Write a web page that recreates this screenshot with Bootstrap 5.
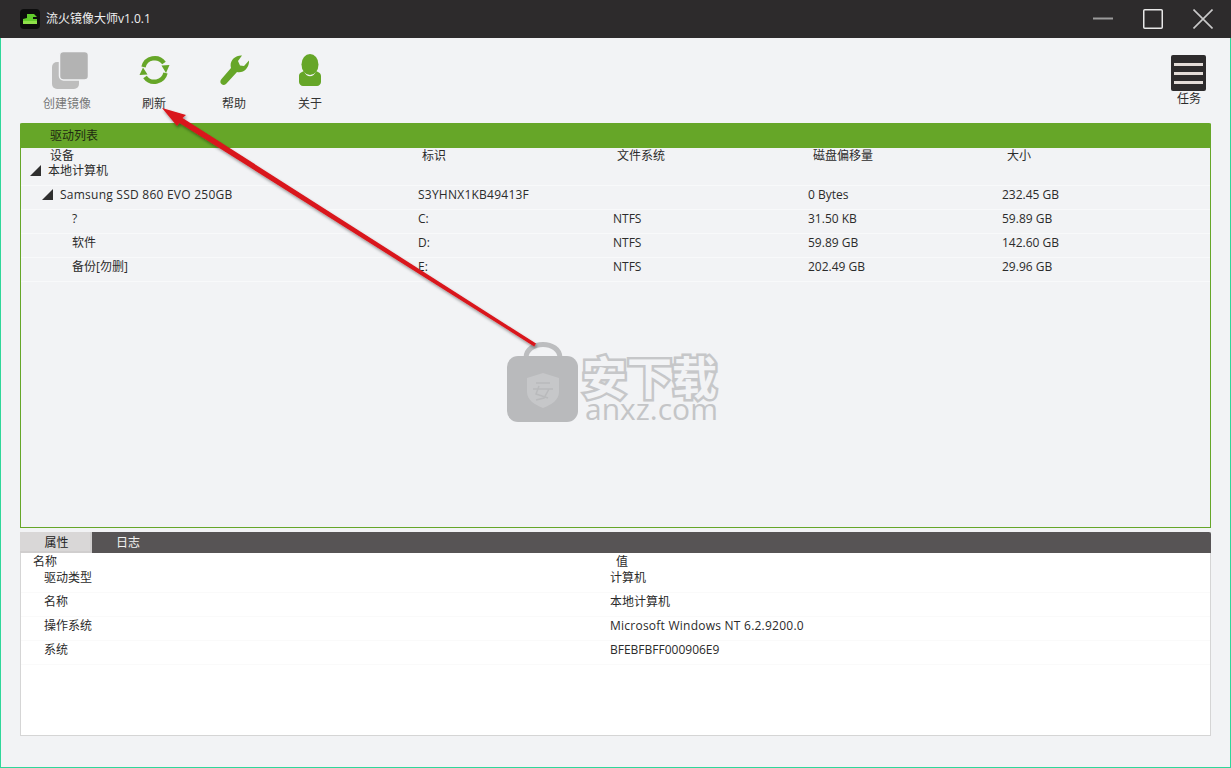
<!DOCTYPE html>
<html lang="zh">
<head>
<meta charset="utf-8">
<title>流火镜像大师</title>
<link href="https://cdn.jsdelivr.net/npm/bootstrap@5.3.0/dist/css/bootstrap.min.css" rel="stylesheet">
<style>
html,body{height:768px;overflow:hidden}
body{background:#f2f3f5;font-family:"Open Sans","Noto Sans CJK SC",sans-serif;font-size:12px;color:#2b2b2b;line-height:16px}
.app-frame{height:768px;border:solid #2fd79a;border-width:0 1px 1px 1px;position:relative;display:flex;flex-direction:column;padding-bottom:31px}
.title-bar{height:38px;background:#2d2b2c;margin:0 -1px;padding-left:20px;color:#f0f0f0;flex:none}
.app-logo{width:20px;height:20px;margin-right:6px}
.title-text{font-size:12px}
.win-btns{margin-left:auto;padding-right:18px;gap:30px}
.tool-bar{height:85px;flex:none;position:relative}
.tool-item{position:absolute;top:14px;width:70px;text-align:center;color:#333}
.tool-item svg{display:block;margin:0 auto 4px;height:40px}
.tool-item.off{color:#777}
.tool-item.off svg{margin-left:20px}
.task-item{margin-left:auto;margin-top:17px;width:36px;text-align:center;margin-right:23px}
.task-box{width:35px;height:36px;background:#2d2b2c;border-radius:2px;display:flex;flex-direction:column;justify-content:center;gap:6px;padding:0 3px}
.task-box i{display:block;height:3px;background:#e3dcd8}
.panel-main{height:405px;margin:0 19px;border:1px solid #66a628;border-top:0;flex:none;border-radius:2px 2px 0 0}
.panel-head{height:25px;margin:0 -1px;background:#66a628;border-radius:2px 2px 0 0;padding:4px 0 0 30px;color:#1f2a12;line-height:17px}
.drive-grid{display:grid;grid-template-columns:397px 195px 195px 194px 1fr}
.drive-head{height:14px;line-height:15px}
.drive-head span{padding-left:4px}
.drive-head span:first-child{padding-left:29px}
.drive-head span:nth-child(n+4){padding-left:5px}
.data-row{height:24px;line-height:17px;border-bottom:1px solid #f8f9fa}
.tree-cell{display:flex;align-items:center;white-space:nowrap;height:17px}
.lv0{padding-left:9px}.lv1{padding-left:21px}.lv2{padding-left:51px}
.tri{width:0;height:0;border-style:solid;border-width:0 0 11px 11px;border-color:transparent transparent #2f2f2f transparent;margin-right:7px}
.wide-txt{letter-spacing:.24px}
.panel-bottom{margin:4px 19px 0;height:204px;flex:none;background:#fff;border:1px solid #d5d5d5;border-top:0}
.tab-strip{height:21px;background:#575455;margin:0 -1px;border-radius:2px 2px 0 0;color:#f2f2f2;line-height:21px}
.tab-on{width:72px;background:#d9d7d7;color:#222;text-align:center;border:2px solid #d0cece;border-width:0 2px 2px 0;padding-left:3px}
.tab-off{margin-left:24px}
.prop-grid{display:grid;grid-template-columns:589px 1fr}
.prop-head{height:16px;line-height:18px}
.prop-head span:first-child{padding-left:12px}
.prop-head span:last-child{padding-left:6px}
.prop-row{height:24px;line-height:17px;border-bottom:1px solid #fafafa}
.prop-row span:first-child{padding-left:23px}
.mark-layer{position:absolute;left:-1px;top:0;width:1231px;height:768px;pointer-events:none}
.wm-text{position:absolute;white-space:nowrap}
.wm-cn{left:582px;top:358px;font-size:45px;line-height:40px;font-weight:700;color:#f2f3f5;-webkit-text-stroke:5px #c6c7c9;paint-order:stroke fill}
.wm-en{left:585px;top:398px;font-size:30px;line-height:22px;font-family:"Open Sans",sans-serif;color:#c4c5c7}
</style>
</head>
<body>
<div class="app-frame">
  <div class="title-bar d-flex align-items-center">
    <svg class="app-logo" viewBox="0 0 20 20"><rect width="20" height="20" rx="4" fill="#0d0d0d"/><path d="M3 10l4-1V5h7l3 3h-4v2h4v5H3z" fill="#62cc2c"/><path d="M3 12h14v3H3z" fill="#8fe04a"/></svg>
    <span class="title-text">流火镜像大师v1.0.1</span>
    <div class="win-btns d-flex align-items-center">
      <svg width="20" height="20" viewBox="0 0 20 20"><path d="M0 9.500h20" stroke="#9b9b9b" stroke-width="2"/></svg>
      <svg width="20" height="20" viewBox="0 0 20 20"><rect x=".75" y=".75" width="18.500" height="18.500" rx="1" fill="none" stroke="#e8e8e8" stroke-width="1.500"/></svg>
      <svg width="20" height="20" viewBox="0 0 20 20"><path d="M.5.5l19 19M19.500.5l-19 19" stroke="#c9c9c9" stroke-width="1.600"/></svg>
    </div>
  </div>
  <div class="tool-bar d-flex">
    <div class="tool-item off" style="left:31px">
      <svg width="36" height="40" viewBox="0 0 36 40"><rect x="0" y="10" width="27" height="27" rx="5" fill="#bdbdbd"/><rect x="7.500" y="-.5" width="29" height="28.500" rx="4" fill="#b3b3b3" stroke="#f2f3f5" stroke-width="1.500"/></svg>
      创建镜像
    </div>
    <div class="tool-item" style="left:118px">
      <svg width="32" height="40" viewBox="0 0 32 40"><g fill="none" stroke="#66a628" stroke-width="4.400"><path d="M5.500 15A11.500 11.500 0 0 1 26 11"/><path d="M27.500 21A11.500 11.500 0 0 1 7 25"/></g><path d="M23.500 13.500l8-.5-3.500 8zM9.500 22.500l-8 .5 3.500-7.500z" fill="#66a628"/></svg>
      刷新
    </div>
    <div class="tool-item" style="left:198px">
      <svg width="30" height="40" viewBox="0 0 30 40"><path d="M23 3.500l-4 5.500 2 4.500 4 .5 5-5.500c.5 6-4.500 13-12 11.500L7 32c-2 1.500-4 1-5-.5-1-1.300-.8-3 .5-4.500L12 16C10 9 16 3 23 3.500z" fill="#66a628"/></svg>
      帮助
    </div>
    <div class="tool-item" style="left:274px">
      <svg width="22" height="40" viewBox="0 0 22 40"><ellipse cx="11" cy="12.500" rx="8.500" ry="10.500" fill="#66a628"/><path d="M0 24c0-3 3-4 5-5 2 7 10 7 12 0 2 1 5 2 5 5v6c0 2-2 4-4 4H4c-2 0-4-2-4-4z" fill="#66a628"/></svg>
      关于
    </div>
    <div class="task-item">
      <div class="task-box"><i></i><i></i><i></i></div>
      任务
    </div>
  </div>
  <div class="panel-main">
    <div class="panel-head">驱动列表</div>
    <div class="drive-grid drive-head"><span>设备</span><span>标识</span><span>文件系统</span><span>磁盘偏移量</span><span>大小</span></div>
    <div class="drive-grid data-row"><span class="tree-cell lv0"><b class="tri"></b>本地计算机</span><span></span><span></span><span></span><span></span></div>
    <div class="drive-grid data-row"><span class="tree-cell lv1"><b class="tri"></b><span class="wide-txt">Samsung SSD 860 EVO 250GB</span></span><span class="wide-txt">S3YHNX1KB49413F</span><span></span><span>0 Bytes</span><span>232.45 GB</span></div>
    <div class="drive-grid data-row"><span class="tree-cell lv2">?</span><span>C:</span><span>NTFS</span><span>31.50 KB</span><span>59.89 GB</span></div>
    <div class="drive-grid data-row"><span class="tree-cell lv2">软件</span><span>D:</span><span>NTFS</span><span>59.89 GB</span><span>142.60 GB</span></div>
    <div class="drive-grid data-row"><span class="tree-cell lv2">备份[勿删]</span><span>E:</span><span>NTFS</span><span>202.49 GB</span><span>29.96 GB</span></div>
  </div>
  <div class="panel-bottom">
    <div class="tab-strip d-flex"><div class="tab-on">属性</div><div class="tab-off">日志</div></div>
    <div class="prop-grid prop-head"><span>名称</span><span>值</span></div>
    <div class="prop-grid prop-row"><span>驱动类型</span><span>计算机</span></div>
    <div class="prop-grid prop-row"><span>名称</span><span>本地计算机</span></div>
    <div class="prop-grid prop-row"><span>操作系统</span><span class="wide-txt">Microsoft Windows NT 6.2.9200.0</span></div>
    <div class="prop-grid prop-row"><span>系统</span><span>BFEBFBFF000906E9</span></div>
  </div>
  <div class="mark-layer">
    <svg width="1231" height="768" viewBox="0 0 1231 768" class="position-absolute top-0 start-0">
      <path d="M526 358c0-18 34-18 34 0" fill="none" stroke="#bcbdbf" stroke-width="5"/>
      <rect x="507" y="356" width="71" height="66" rx="11" fill="#b9babc"/>
      <path d="M527 378l16-5 16 5v14c0 8-8 13-16 16-8-3-16-8-16-16z" fill="#c6c7c9"/>
      <path d="M536 383h14M533 389h20M539 386l-3 8 12 4M549 389l-5 9-8 2" fill="none" stroke="#b9babc" stroke-width="1.500"/>
    </svg>
    <div class="wm-text wm-cn">安下载</div>
    <div class="wm-text wm-en">anxz.com</div>
    <svg width="1231" height="768" viewBox="0 0 1231 768" class="position-absolute top-0 start-0">
      <defs><filter id="arrow-shadow" x="-5%" y="-5%" width="110%" height="110%"><feDropShadow dx="1" dy="2" stdDeviation="1.500" flood-color="#000" flood-opacity=".4"/></filter></defs>
      <path d="M162 108L186 115 182.500 118 536 343.600 534.200 346.400 179.500 123 177 126z" fill="#d9141b" filter="url(#arrow-shadow)"/>
    </svg>
  </div>
</div>
<script src="https://cdn.jsdelivr.net/npm/bootstrap@5.3.0/dist/js/bootstrap.bundle.min.js"></script>
</body>
</html>
